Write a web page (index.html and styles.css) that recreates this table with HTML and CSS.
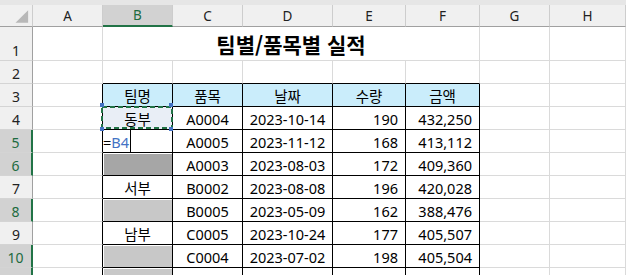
FILE: index.html
```html
<!DOCTYPE html>
<html lang="ko">
<head>
<meta charset="utf-8">
<title>팀별/품목별 실적</title>
<link rel="stylesheet" href="styles.css">
</head>
<body>
<div class="strip"></div>
<div class="sheet">
  <div class="ch corner"><svg width="33" height="21" viewBox="0 0 33 21"><polygon points="29,5 29,18 16,18" fill="#b8b8b8"/></svg></div>
  <div class="ch">A</div>
  <div class="ch sel">B</div>
  <div class="ch">C</div>
  <div class="ch">D</div>
  <div class="ch">E</div>
  <div class="ch">F</div>
  <div class="ch">G</div>
  <div class="ch">H</div>

  <div class="rh">1</div>
  <div class="c"></div>
  <div class="c title">팀별/품목별 실적</div>
  <div class="c"></div>
  <div class="c"></div>

  <div class="rh">2</div>
  <div class="c"></div>
  <div class="c tt"></div>
  <div class="c tt"></div>
  <div class="c tt"></div>
  <div class="c tt"></div>
  <div class="c tt"></div>
  <div class="c"></div>
  <div class="c"></div>

  <div class="rh">3</div>
  <div class="c tl"></div>
  <div class="c t hd">팀명</div>
  <div class="c t hd">품목</div>
  <div class="c t hd">날짜</div>
  <div class="c t hd">수량</div>
  <div class="c t hd">금액</div>
  <div class="c"></div>
  <div class="c"></div>

  <div class="rh">4</div>
  <div class="c tl"></div>
  <div class="c t src">동부<svg class="ants" width="75" height="29" viewBox="0 0 75 29"><rect x="2" y="4" width="70" height="21" fill="none" stroke="#217346" stroke-width="2" stroke-dasharray="5 3"/><rect x="0" y="0" width="4" height="4" fill="#4472c4"/><rect x="69" y="0" width="4" height="4" fill="#4472c4"/><rect x="0" y="24" width="4" height="4" fill="#4472c4"/><rect x="69" y="24" width="4" height="4" fill="#4472c4"/></svg></div>
  <div class="c t">A0004</div>
  <div class="c t">2023-10-14</div>
  <div class="c t r">190</div>
  <div class="c t r">432,250</div>
  <div class="c"></div>
  <div class="c"></div>

  <div class="rh sel">5</div>
  <div class="c tl"></div>
  <div class="c t edit"><span class="eq">=</span><span class="ref">B4</span><span class="caret"></span></div>
  <div class="c t">A0005</div>
  <div class="c t">2023-11-12</div>
  <div class="c t r">168</div>
  <div class="c t r">413,112</div>
  <div class="c"></div>
  <div class="c"></div>

  <div class="rh sel">6</div>
  <div class="c tl"></div>
  <div class="c t g1"></div>
  <div class="c t">A0003</div>
  <div class="c t">2023-08-03</div>
  <div class="c t r">172</div>
  <div class="c t r">409,360</div>
  <div class="c"></div>
  <div class="c"></div>

  <div class="rh">7</div>
  <div class="c tl"></div>
  <div class="c t">서부</div>
  <div class="c t">B0002</div>
  <div class="c t">2023-08-08</div>
  <div class="c t r">196</div>
  <div class="c t r">420,028</div>
  <div class="c"></div>
  <div class="c"></div>

  <div class="rh sel">8</div>
  <div class="c tl"></div>
  <div class="c t g2"></div>
  <div class="c t">B0005</div>
  <div class="c t">2023-05-09</div>
  <div class="c t r">162</div>
  <div class="c t r">388,476</div>
  <div class="c"></div>
  <div class="c"></div>

  <div class="rh">9</div>
  <div class="c tl"></div>
  <div class="c t">남부</div>
  <div class="c t">C0005</div>
  <div class="c t">2023-10-24</div>
  <div class="c t r">177</div>
  <div class="c t r">405,507</div>
  <div class="c"></div>
  <div class="c"></div>

  <div class="rh sel">10</div>
  <div class="c tl"></div>
  <div class="c t g2"></div>
  <div class="c t">C0004</div>
  <div class="c t">2023-07-02</div>
  <div class="c t r">198</div>
  <div class="c t r">405,504</div>
  <div class="c"></div>
  <div class="c"></div>

  <div class="rh sel">11</div>
  <div class="c tl"></div>
  <div class="c t g2"></div>
  <div class="c t">C0003</div>
  <div class="c t">2023-11-28</div>
  <div class="c t r">174</div>
  <div class="c t r">403,338</div>
  <div class="c"></div>
  <div class="c"></div>
</div>
</body>
</html>
```

FILE: styles.css
```css
* {
  box-sizing: border-box;
  margin: 0;
  padding: 0;
}

html, body {
  width: 626px;
  height: 275px;
  overflow: hidden;
  background: #fff;
}

body {
  font-family: "Noto Sans", "Noto Sans CJK KR", sans-serif;
  color: #000;
}

.strip {
  height: 5px;
  background: #e6e6e6;
}

.sheet {
  display: grid;
  grid-template-columns: 33px 70px 70px 70px 90px 73px 74px 70px 76px;
  grid-template-rows: 22px 34px repeat(10, 23px);
}

.c {
  border-right: 1px solid #dadada;
  border-bottom: 1px solid #dadada;
  display: flex;
  align-items: flex-end;
  justify-content: center;
  font-size: 14.5px;
  line-height: 20px;
  white-space: nowrap;
}

.ch {
  background: #f0f0f0;
  border-right: 1px solid #cdcdcd;
  border-bottom: 1px solid #a0a0a0;
  display: flex;
  align-items: center;
  justify-content: center;
  font-size: 13.5px;
  color: #222;
}

.ch.sel {
  background: #d2d2d2;
  color: #1d6b40;
  border-bottom: 2px solid #217346;
}

.corner {
  align-items: flex-start;
  justify-content: flex-start;
}

.corner svg {
  display: block;
}

.rh {
  background: #f0f0f0;
  border-right: 1px solid #a0a0a0;
  border-bottom: 1px solid #d4d4d4;
  display: flex;
  justify-content: center;
  align-items: flex-end;
  font-size: 14px;
  line-height: 19px;
  color: #222;
}

.rh.sel {
  background: #d2d2d2;
  color: #1d6b40;
  border-right: 2px solid #217346;
}

.title {
  grid-column: span 5;
  align-items: center;
  font-family: "Noto Sans CJK KR", sans-serif;
  font-weight: 700;
  font-size: 21px;
  line-height: 28px;
}

.tt {
  border-bottom-color: #000;
}

.tl {
  border-right-color: #000;
}

.t {
  border-right-color: #000;
  border-bottom-color: #000;
}

.hd {
  background: #caedfb;
}

.r {
  justify-content: flex-end;
  padding-right: 7px;
}

.src {
  position: relative;
  background: #e9eef6;
}

.ants {
  position: absolute;
  left: -3px;
  top: -4px;
  overflow: visible;
}

.edit {
  justify-content: flex-start;
}

.eq {
  color: #000;
}

.ref {
  color: #4472c4;
}

.caret {
  align-self: stretch;
  width: 1px;
  margin-left: 1px;
  background: #000;
}

.g1 {
  background: #a6a6a6;
  box-shadow: inset 1px 1px 0 #fff;
}

.g2 {
  background: #c8c8c8;
  box-shadow: inset 1px 1px 0 #fff;
}
```
